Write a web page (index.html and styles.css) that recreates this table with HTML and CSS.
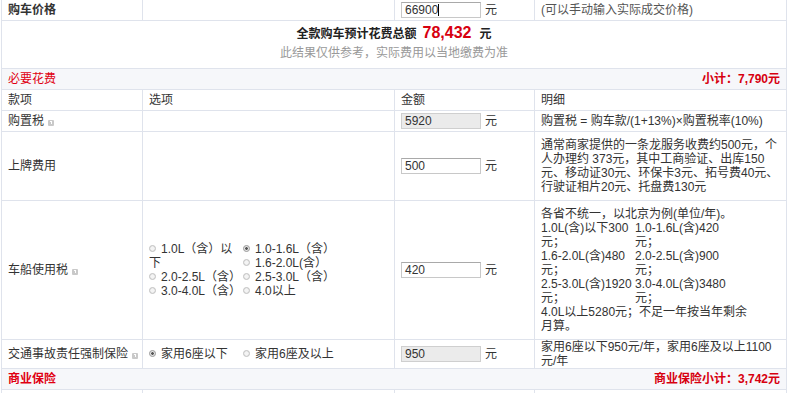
FILE: index.html
```html
<!DOCTYPE html>
<html lang="zh-CN">
<head>
<meta charset="utf-8">
<title>购车计算</title>
<link rel="stylesheet" href="styles.css">
</head>
<body>
<table class="calc">
  <colgroup><col class="c1"><col class="c2"><col class="c3"><col class="c4"></colgroup>
  <tr>
    <td class="lbl-b">购车价格</td>
    <td></td>
    <td><div class="amt"><span class="inp">66900<i class="caret"></i></span><span class="unit">元</span></div></td>
    <td class="hint">(可以手动输入实际成交价格)</td>
  </tr>
  <tr>
    <td colspan="4" class="total">
      <div class="total-line"><b>全款购车预计花费总额</b><span class="sum">78,432</span><b class="yuan">元</b></div>
      <div class="total-note">此结果仅供参考，实际费用以当地缴费为准</div>
    </td>
  </tr>
  <tr class="sec">
    <td colspan="4"><div class="sec-in"><span class="sec-title">必要花费</span><span class="sec-sum">小计：7,790元</span></div></td>
  </tr>
  <tr>
    <td>款项</td><td>选项</td><td>金额</td><td>明细</td>
  </tr>
  <tr>
    <td>购置税<i class="q"></i></td>
    <td></td>
    <td><div class="amt"><span class="inp dis">5920</span><span class="unit">元</span></div></td>
    <td>购置税 = 购车款/(1+13%)×购置税率(10%)</td>
  </tr>
  <tr>
    <td>上牌费用</td>
    <td></td>
    <td><div class="amt"><span class="inp">500</span><span class="unit">元</span></div></td>
    <td><div class="detail pad">通常商家提供的一条龙服务收费约500元，个人办理约 373元，其中工商验证、出库150元、移动证30元、环保卡3元、拓号费40元、行驶证相片20元、托盘费130元</div></td>
  </tr>
  <tr>
    <td>车船使用税<i class="q"></i></td>
    <td>
      <div class="opts">
        <span class="opt"><i class="radio"></i>1.0L（含）以下</span>
        <span class="opt"><i class="radio on"></i>1.0-1.6L（含）</span>
        <span class="opt"><i class="radio"></i>1.6-2.0L(含）</span>
        <span class="opt"><i class="radio"></i>2.0-2.5L（含）</span>
        <span class="opt"><i class="radio"></i>2.5-3.0L（含）</span>
        <span class="opt"><i class="radio"></i>3.0-4.0L（含）</span>
        <span class="opt"><i class="radio"></i>4.0以上</span>
      </div>
    </td>
    <td><div class="amt"><span class="inp">420</span><span class="unit">元</span></div></td>
    <td>
      <div class="detail pad narrow">各省不统一，以北京为例(单位/年)。<div class="items"><span class="it">1.0L(含)以下300元；</span><span class="it">1.0-1.6L(含)420元；</span><span class="it">1.6-2.0L(含)480元；</span><span class="it">2.0-2.5L(含)900元；</span><span class="it">2.5-3.0L(含)1920元；</span><span class="it">3.0-4.0L(含)3480元；</span></div>4.0L以上5280元；不足一年按当年剩余月算。</div>
    </td>
  </tr>
  <tr>
    <td class="tight">交通事故责任强制保险<i class="q"></i></td>
    <td><div class="opts one"><span class="opt"><i class="radio on"></i>家用6座以下</span><span class="opt"><i class="radio"></i>家用6座及以上</span></div></td>
    <td><div class="amt"><span class="inp dis">950</span><span class="unit">元</span></div></td>
    <td><div class="detail">家用6座以下950元/年，家用6座及以上1100元/年</div></td>
  </tr>
  <tr class="sec">
    <td colspan="4"><div class="sec-in"><span class="sec-title b">商业保险</span><span class="sec-sum">商业保险小计：3,742元</span></div></td>
  </tr>
  <tr class="last">
    <td></td><td></td><td></td><td></td>
  </tr>
</table>
</body>
</html>
```
FILE: styles.css
```css
html, body {
  margin: 0;
  padding: 0;
  background: #fff;
}
body {
  font-family: "Liberation Sans", "Noto Sans CJK SC", sans-serif;
  font-size: 12px;
  line-height: 20px;
  color: #333;
  overflow: hidden;
}
.calc {
  border-collapse: collapse;
  table-layout: fixed;
  width: 785px;
  margin: -1px 0 0 1px;
}
.c1 { width: 141px; }
.c2 { width: 252px; }
.c3 { width: 140px; }
.c4 { width: 252px; }
.calc td {
  border: 1px solid #dfe3ec;
  padding: 0 6px;
  vertical-align: middle;
  line-height: 20px;
  height: 20px;
}
.calc td.tight { padding-right: 0; white-space: nowrap; }
.lbl-b { font-weight: bold; }
.hint { color: #555; }
.amt {
  display: flex;
  align-items: center;
  height: 20px;
}
.inp {
  position: relative;
  box-sizing: border-box;
  width: 80px;
  height: 16px;
  border: 1px solid #c8c8c8;
  border-top-color: #a9a9a9;
  background: #fff;
  padding: 0 3px;
  line-height: 14px;
  font-size: 12px;
  color: #333;
}
.inp.dis {
  background: #ebebeb;
  border-color: #cfcfcf;
}
.caret {
  display: inline-block;
  width: 1px;
  height: 12px;
  background: #000;
  vertical-align: -2px;
}
.unit { margin-left: 4px; }
.total {
  text-align: center;
  padding: 2px 0 6px;
}
.calc td.total { padding: 2px 0 6px; }
.total-line {
  line-height: 20px;
  display: flex;
  justify-content: center;
  align-items: baseline;
  color: #222;
}
.sum {
  color: #d7000f;
  font-weight: bold;
  font-size: 16px;
  margin: 0 8px 0 6px;
}
.yuan { font-size: 12px; }
.total-note {
  color: #999;
  line-height: 18px;
}
.sec td { background: #f6f7fa; }
.sec-in {
  display: flex;
  justify-content: space-between;
  line-height: 20px;
}
.sec-title { color: #e00012; }
.sec-title.b { font-weight: bold; }
.sec-sum { color: #d7000f; font-weight: bold; }
.q {
  display: inline-block;
  width: 6px;
  height: 6px;
  margin-left: 4px;
  background: #c9c9c9;
  border-radius: 1px;
  vertical-align: -1px;
  position: relative;
}
.q::after {
  content: "";
  position: absolute;
  left: 2px;
  top: 1px;
  width: 2px;
  height: 3px;
  border: 0 solid #fff;
  border-width: 1px 1px 0 0;
  box-sizing: border-box;
}
.opts {
  width: 188px;
  line-height: 14px;
  display: flow-root;
}
.opts.one { line-height: 20px; }
.opt {
  float: left;
  width: 94px;
  font-size: 12px;
}
.radio {
  display: inline-block;
  box-sizing: border-box;
  width: 7px;
  height: 7px;
  border-radius: 50%;
  border: 1px solid #c2c2c2;
  background: radial-gradient(circle, #f4f4f4 0 40%, #dcdcdc 100%);
  margin-right: 5px;
  vertical-align: 1px;
}
.radio.on {
  border-color: #9a9a9a;
  background: radial-gradient(circle, #555 0 30%, #e0e0e0 45%, #ececec 100%);
}
.detail {
  line-height: 14px;
}
.detail.pad { padding: 6px 0; }
.detail.narrow { width: 215px; }
.items {
  display: flow-root;
}
.it {
  float: left;
  width: 94px;
}
.last td { height: 20px; }
```
